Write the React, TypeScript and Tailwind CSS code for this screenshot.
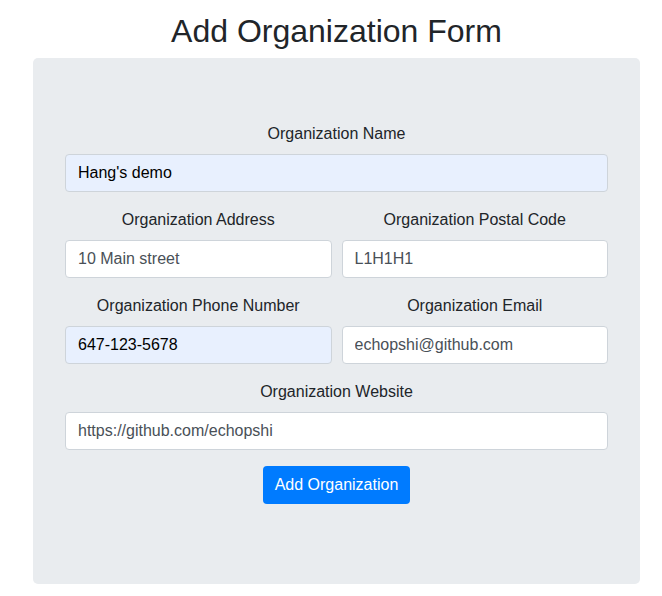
import React from 'react';

const font = { fontFamily: '"Liberation Sans", Arial, sans-serif' };

interface FieldProps {
  label: string;
  value: string;
  autofill?: boolean;
}

const Field: React.FC<FieldProps> = ({ label, value, autofill }) => (
  <div className="mb-4 flex min-w-0 flex-1 flex-col">
    <label className="mb-2 text-center text-base leading-6 text-[#212529]">{label}</label>
    <input
      readOnly
      value={value}
      className={
        autofill
          ? 'h-[38px] w-full rounded border border-[#ced4da] bg-[#e8f0fe] px-3 text-base text-black outline-none'
          : 'h-[38px] w-full rounded border border-[#ced4da] bg-white px-3 text-base text-[#495057] outline-none'
      }
      style={font}
    />
  </div>
);

export default function App() {
  return (
    <div className="min-h-[596px] bg-white" style={font}>
      <div className="ml-[33px] w-[607px]">
        <h1 className="mb-2 pt-3 text-center text-[32px] font-medium leading-[38px] text-[#212529]">
          Add Organization Form
        </h1>
        <div className="rounded-[5px] bg-[#e9ecef] px-8 pb-16 pt-16">
          <form>
            <Field label="Organization Name" value="Hang's demo" autofill />
            <div className="flex gap-[10px]">
              <Field label="Organization Address" value="10 Main street" />
              <Field label="Organization Postal Code" value="L1H1H1" />
            </div>
            <div className="flex gap-[10px]">
              <Field label="Organization Phone Number" value="647-123-5678" autofill />
              <Field label="Organization Email" value="echopshi@github.com" />
            </div>
            <Field label="Organization Website" value="https://github.com/echopshi" />
            <div className="mb-4 flex justify-center">
              <button
                type="button"
                className="h-[38px] rounded bg-[#007bff] px-3 text-base text-white"
                style={font}
              >
                Add Organization
              </button>
            </div>
          </form>
        </div>
      </div>
    </div>
  );
}
